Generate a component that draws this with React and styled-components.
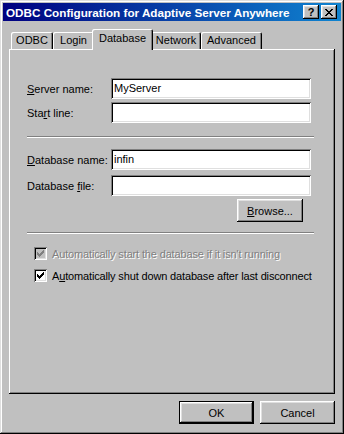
import React from 'react'
import styled, { createGlobalStyle, css } from 'styled-components'

const Global = createGlobalStyle`
  html, body { margin: 0; padding: 0; background: #c0c0c0; }
  body { font-family: "Liberation Sans", Arial, sans-serif; font-size: 11px; color: #000; }
`

const raised = css`
  box-shadow: inset -1px -1px #000, inset 1px 1px #fff, inset -2px -2px #808080, inset 2px 2px #dfdfdf;
`
const sunken = css`
  box-shadow: inset 1px 1px #808080, inset -1px -1px #fff, inset 2px 2px #000, inset -2px -2px #dfdfdf;
`

const Window = styled.div`
  width: 344px;
  height: 434px;
  box-sizing: border-box;
  padding: 3px;
  background: #c0c0c0;
  box-shadow: inset -1px -1px #000, inset 1px 1px #dfdfdf, inset -2px -2px #808080, inset 2px 2px #fff;
  display: flex;
  flex-direction: column;
`

const TitleBar = styled.div`
  height: 18px;
  display: flex;
  align-items: center;
  padding: 0 4px 0 3px;
  background: linear-gradient(to right, #000080, #1084d0);
  color: #fff;
  font-weight: bold;
  font-size: 11.7px;
`

const Title = styled.div`
  flex: 1;
  white-space: nowrap;
`

const TitleButton = styled.div`
  width: 16px;
  height: 14px;
  box-sizing: border-box;
  background: #c0c0c0;
  ${raised}
  display: flex;
  align-items: center;
  justify-content: center;
  color: #000;
  font-size: 11px;
  font-weight: bold;
  margin-left: ${p => p.$gap || 0}px;
`

const Body = styled.div`
  flex: 1;
  display: flex;
  flex-direction: column;
  padding: 8px 6px 7px 6px;
`

const Tabs = styled.div`
  display: flex;
  height: 20px;
  align-items: flex-end;
  padding-left: 2px;
  position: relative;
  z-index: 1;
`

const Tab = styled.div`
  position: relative;
  box-sizing: border-box;
  width: ${p => p.$w}px;
  height: ${p => (p.$active ? 21 : 17)}px;
  padding-bottom: ${p => (p.$active ? 3 : 1)}px;
  margin: ${p => (p.$active ? '0 -2px -1px' : '0')};
  z-index: ${p => (p.$active ? 2 : 0)};
  display: flex;
  align-items: center;
  justify-content: center;
  background: #c0c0c0;
  border-top-left-radius: 2px;
  border-top-right-radius: 2px;
  box-shadow: inset 1px 1px #fff, inset -1px 0 #000, inset -2px 0 #808080;
  font-size: 11px;
  white-space: nowrap;
`

const Panel = styled.div`
  flex: 1;
  background: #c0c0c0;
  box-shadow: inset -1px -1px #000, inset 1px 1px #fff, inset -2px -2px #808080;
  padding: 29px 20px 0 18px;
  display: flex;
  flex-direction: column;
`

const Row = styled.div`
  display: flex;
  align-items: center;
  height: 21px;
  margin-bottom: ${p => p.$mb || 3}px;
`

const Label = styled.label`
  width: 84px;
  flex-shrink: 0;
  white-space: nowrap;
`

const Input = styled.div`
  width: 200px;
  height: 21px;
  box-sizing: border-box;
  background: #fff;
  ${sunken}
  padding: 3px 3px 0 3px;
  line-height: 15px;
  white-space: nowrap;
`

const Separator = styled.div`
  height: 2px;
  width: 287px;
  border-top: 1px solid #808080;
  border-bottom: 1px solid #fff;
  box-sizing: border-box;
  margin: ${p => p.$m};
`

const ButtonRow = styled.div`
  display: flex;
  justify-content: flex-end;
  padding-right: ${p => p.$pr || 0}px;
`

const Button = styled.div`
  width: ${p => p.$w || 75}px;
  height: 23px;
  box-sizing: border-box;
  background: #c0c0c0;
  ${p => p.$default
    ? css`box-shadow: inset 0 0 0 1px #000, inset -2px -2px #000, inset 2px 2px #fff, inset -3px -3px #808080, inset 3px 3px #dfdfdf;`
    : raised}
  display: flex;
  align-items: center;
  justify-content: center;
  font-size: 11px;
`

const CheckRow = styled.div`
  display: flex;
  align-items: center;
  height: 13px;
  margin: ${p => p.$m};
  padding-left: 7px;
  color: ${p => (p.$disabled ? '#808080' : '#000')};
  text-shadow: ${p => (p.$disabled ? '1px 1px #fff' : 'none')};
  white-space: nowrap;
  letter-spacing: -0.15px;
`

const Box = styled.div`
  width: 13px;
  height: 13px;
  margin-right: 5px;
  box-sizing: border-box;
  background: ${p => (p.$disabled ? '#c0c0c0' : '#fff')};
  ${sunken}
  display: flex;
  align-items: center;
  justify-content: center;
  flex-shrink: 0;
`

const Footer = styled.div`
  display: flex;
  justify-content: flex-end;
  gap: 6px;
  margin-top: 7px;
`

const Check = ({ color }) => (
  <svg width="7" height="7" viewBox="0 0 7 7" shapeRendering="crispEdges">
    <path fill={color} d="M6 0h1v3h-1v1h-1v1h-1v1h-1v1h-1v-1h-1v-1h-1v-3h1v1h1v1h1v-1h1v-1h1z" />
  </svg>
)

const Close = () => (
  <svg width="8" height="7" viewBox="0 0 8 7" shapeRendering="crispEdges">
    <path fill="#000" d="M0 0h2v1h1v1h2v-1h1v-1h2v1h-1v1h-1v1h-1v1h1v1h1v1h1v1h-2v-1h-1v-1h-2v1h-1v1h-2v-1h1v-1h1v-1h1v-1h-1v-1h-1v-1h-1z" />
  </svg>
)

const U = styled.span`
  text-decoration: underline;
`

export default function App() {
  return (
    <>
      <Global />
      <Window>
        <TitleBar>
          <Title>ODBC Configuration for Adaptive Server Anywhere</Title>
          <TitleButton>?</TitleButton>
          <TitleButton $gap={2}><Close /></TitleButton>
        </TitleBar>
        <Body>
          <Tabs>
            <Tab $w={42}>ODBC</Tab>
            <Tab $w={41}>Login</Tab>
            <Tab $w={61} $active>Database</Tab>
            <Tab $w={50}>Network</Tab>
            <Tab $w={61}>Advanced</Tab>
          </Tabs>
          <Panel>
            <Row>
              <Label><U>S</U>erver name:</Label>
              <Input>MyServer</Input>
            </Row>
            <Row>
              <Label>Sta<U>r</U>t line:</Label>
              <Input />
            </Row>
            <Separator $m="10px 0 11px" />
            <Row $mb={5}>
              <Label><U>D</U>atabase name:</Label>
              <Input>infin</Input>
            </Row>
            <Row>
              <Label>Database <U>f</U>ile:</Label>
              <Input />
            </Row>
            <ButtonRow $pr={12}>
              <Button $w={66}><U>B</U>rowse...</Button>
            </ButtonRow>
            <Separator $m="10px 0 0" />
            <CheckRow $m="13px 0 0" $disabled>
              <Box $disabled><Check color="#808080" /></Box>
              <span>Automatically start the database if it isn't running</span>
            </CheckRow>
            <CheckRow $m="9px 0 0">
              <Box><Check color="#000" /></Box>
              <span>A<U>u</U>tomatically shut down database after last disconnect</span>
            </CheckRow>
          </Panel>
          <Footer>
            <Button $default>OK</Button>
            <Button>Cancel</Button>
          </Footer>
        </Body>
      </Window>
    </>
  )
}
